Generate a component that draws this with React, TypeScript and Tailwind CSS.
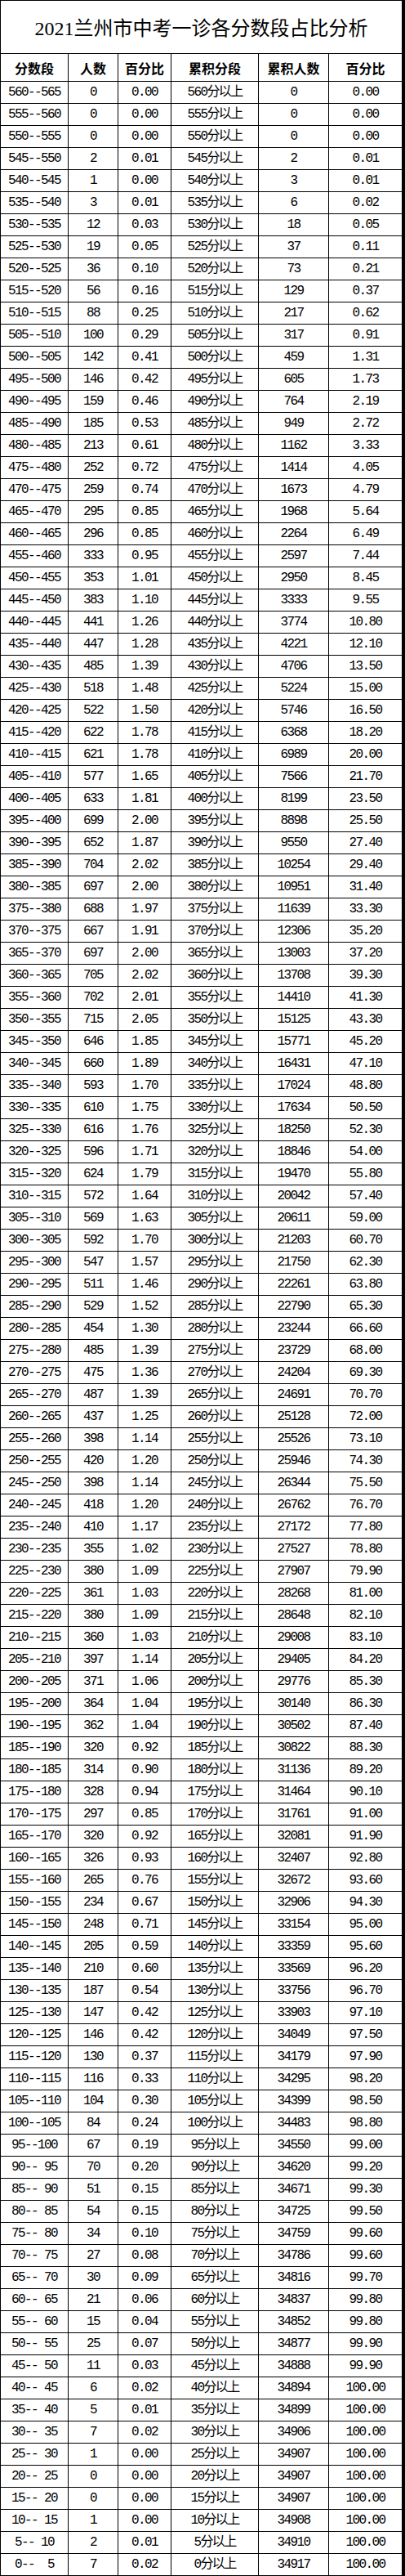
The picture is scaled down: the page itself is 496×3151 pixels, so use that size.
// 2021兰州市中考一诊各分数段占比分析 — 一张纯表格
// 每行: [人数, 百分比, 累积人数, 累积百分比], 分数段从 560 往下每 5 分一档
const ROWS: [number, string, number, string][] = [
  [0, '0.00', 0, '0.00'],
  [0, '0.00', 0, '0.00'],
  [0, '0.00', 0, '0.00'],
  [2, '0.01', 2, '0.01'],
  [1, '0.00', 3, '0.01'],
  [3, '0.01', 6, '0.02'],
  [12, '0.03', 18, '0.05'],
  [19, '0.05', 37, '0.11'],
  [36, '0.10', 73, '0.21'],
  [56, '0.16', 129, '0.37'],
  [88, '0.25', 217, '0.62'],
  [100, '0.29', 317, '0.91'],
  [142, '0.41', 459, '1.31'],
  [146, '0.42', 605, '1.73'],
  [159, '0.46', 764, '2.19'],
  [185, '0.53', 949, '2.72'],
  [213, '0.61', 1162, '3.33'],
  [252, '0.72', 1414, '4.05'],
  [259, '0.74', 1673, '4.79'],
  [295, '0.85', 1968, '5.64'],
  [296, '0.85', 2264, '6.49'],
  [333, '0.95', 2597, '7.44'],
  [353, '1.01', 2950, '8.45'],
  [383, '1.10', 3333, '9.55'],
  [441, '1.26', 3774, '10.80'],
  [447, '1.28', 4221, '12.10'],
  [485, '1.39', 4706, '13.50'],
  [518, '1.48', 5224, '15.00'],
  [522, '1.50', 5746, '16.50'],
  [622, '1.78', 6368, '18.20'],
  [621, '1.78', 6989, '20.00'],
  [577, '1.65', 7566, '21.70'],
  [633, '1.81', 8199, '23.50'],
  [699, '2.00', 8898, '25.50'],
  [652, '1.87', 9550, '27.40'],
  [704, '2.02', 10254, '29.40'],
  [697, '2.00', 10951, '31.40'],
  [688, '1.97', 11639, '33.30'],
  [667, '1.91', 12306, '35.20'],
  [697, '2.00', 13003, '37.20'],
  [705, '2.02', 13708, '39.30'],
  [702, '2.01', 14410, '41.30'],
  [715, '2.05', 15125, '43.30'],
  [646, '1.85', 15771, '45.20'],
  [660, '1.89', 16431, '47.10'],
  [593, '1.70', 17024, '48.80'],
  [610, '1.75', 17634, '50.50'],
  [616, '1.76', 18250, '52.30'],
  [596, '1.71', 18846, '54.00'],
  [624, '1.79', 19470, '55.80'],
  [572, '1.64', 20042, '57.40'],
  [569, '1.63', 20611, '59.00'],
  [592, '1.70', 21203, '60.70'],
  [547, '1.57', 21750, '62.30'],
  [511, '1.46', 22261, '63.80'],
  [529, '1.52', 22790, '65.30'],
  [454, '1.30', 23244, '66.60'],
  [485, '1.39', 23729, '68.00'],
  [475, '1.36', 24204, '69.30'],
  [487, '1.39', 24691, '70.70'],
  [437, '1.25', 25128, '72.00'],
  [398, '1.14', 25526, '73.10'],
  [420, '1.20', 25946, '74.30'],
  [398, '1.14', 26344, '75.50'],
  [418, '1.20', 26762, '76.70'],
  [410, '1.17', 27172, '77.80'],
  [355, '1.02', 27527, '78.80'],
  [380, '1.09', 27907, '79.90'],
  [361, '1.03', 28268, '81.00'],
  [380, '1.09', 28648, '82.10'],
  [360, '1.03', 29008, '83.10'],
  [397, '1.14', 29405, '84.20'],
  [371, '1.06', 29776, '85.30'],
  [364, '1.04', 30140, '86.30'],
  [362, '1.04', 30502, '87.40'],
  [320, '0.92', 30822, '88.30'],
  [314, '0.90', 31136, '89.20'],
  [328, '0.94', 31464, '90.10'],
  [297, '0.85', 31761, '91.00'],
  [320, '0.92', 32081, '91.90'],
  [326, '0.93', 32407, '92.80'],
  [265, '0.76', 32672, '93.60'],
  [234, '0.67', 32906, '94.30'],
  [248, '0.71', 33154, '95.00'],
  [205, '0.59', 33359, '95.60'],
  [210, '0.60', 33569, '96.20'],
  [187, '0.54', 33756, '96.70'],
  [147, '0.42', 33903, '97.10'],
  [146, '0.42', 34049, '97.50'],
  [130, '0.37', 34179, '97.90'],
  [116, '0.33', 34295, '98.20'],
  [104, '0.30', 34399, '98.50'],
  [84, '0.24', 34483, '98.80'],
  [67, '0.19', 34550, '99.00'],
  [70, '0.20', 34620, '99.20'],
  [51, '0.15', 34671, '99.30'],
  [54, '0.15', 34725, '99.50'],
  [34, '0.10', 34759, '99.60'],
  [27, '0.08', 34786, '99.60'],
  [30, '0.09', 34816, '99.70'],
  [21, '0.06', 34837, '99.80'],
  [15, '0.04', 34852, '99.80'],
  [25, '0.07', 34877, '99.90'],
  [11, '0.03', 34888, '99.90'],
  [6, '0.02', 34894, '100.00'],
  [5, '0.01', 34899, '100.00'],
  [7, '0.02', 34906, '100.00'],
  [1, '0.00', 34907, '100.00'],
  [0, '0.00', 34907, '100.00'],
  [0, '0.00', 34907, '100.00'],
  [1, '0.00', 34908, '100.00'],
  [2, '0.01', 34910, '100.00'],
  [7, '0.02', 34917, '100.00'],
]

const HEAD = ['分数段', '人数', '百分比', '累积分段', '累积人数', '百分比']

const cell =
  'flex h-[26px] items-center justify-center whitespace-pre bg-white text-[16px] tracking-[-1.6px] text-black'

export default function App() {
  return (
    <div className="w-[496px] bg-white">
      <div className="grid grid-cols-[82px_60px_64px_106px_85px_89px] gap-px bg-black pb-px pl-px pr-[4px] pt-px font-['Liberation_Mono','Noto_Sans_CJK_SC',monospace]">
        <div className="col-span-6 flex h-[64px] items-center justify-center bg-white pt-1 font-['Liberation_Serif','Noto_Sans_CJK_SC',serif] text-[24px] text-black">
          2021兰州市中考一诊各分数段占比分析
        </div>

        {HEAD.map((h, i) => (
          <div
            key={i}
            className="flex h-[33px] items-center justify-center bg-white font-['Noto_Sans_CJK_SC',sans-serif] text-[16px] font-bold text-black"
          >
            {h}
          </div>
        ))}

        {ROWS.map(([n, pct, cum, cumPct], i) => {
          const lo = 560 - i * 5
          const hi = String(lo + 5).padStart(3, ' ')
          return [
            <div key={`a${i}`} className={cell}>{`${lo}--${hi}`}</div>,
            <div key={`b${i}`} className={cell}>{n}</div>,
            <div key={`c${i}`} className={cell}>{pct}</div>,
            <div key={`d${i}`} className={cell}>{`${lo}分以上`}</div>,
            <div key={`e${i}`} className={cell}>{cum}</div>,
            <div key={`f${i}`} className={cell}>{cumPct}</div>,
          ]
        })}
      </div>
    </div>
  )
}
